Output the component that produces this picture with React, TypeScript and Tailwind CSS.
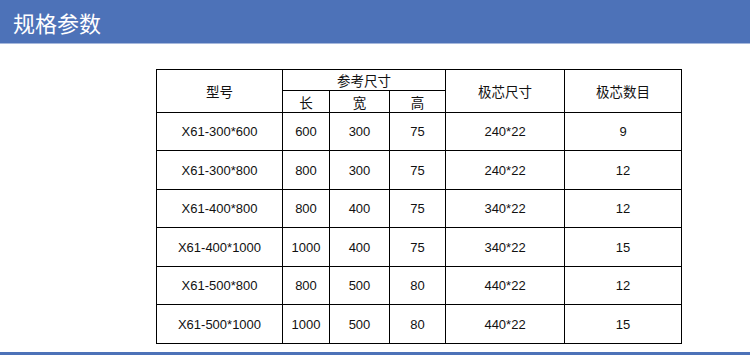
import React from 'react';

interface SpecRow {
  model: string;
  length: string;
  width: string;
  height: string;
  core: string;
  count: string;
}

const rows: SpecRow[] = [
  { model: 'X61-300*600', length: '600', width: '300', height: '75', core: '240*22', count: '9' },
  { model: 'X61-300*800', length: '800', width: '300', height: '75', core: '240*22', count: '12' },
  { model: 'X61-400*800', length: '800', width: '400', height: '75', core: '340*22', count: '12' },
  { model: 'X61-400*1000', length: '1000', width: '400', height: '75', core: '340*22', count: '15' },
  { model: 'X61-500*800', length: '800', width: '500', height: '80', core: '440*22', count: '12' },
  { model: 'X61-500*1000', length: '1000', width: '500', height: '80', core: '440*22', count: '15' },
];

const rowHeights = ['h-[38px]', 'h-[39px]', 'h-[38px]', 'h-[39px]', 'h-[38px]', 'h-[39px]'];

const cell = 'border border-black text-center align-middle p-0';

const App: React.FC = () => {
  return (
    <div className="w-[750px] h-[355px] bg-white flex flex-col overflow-hidden">
      <div className="h-[44px] bg-[#4d72b8] border-b border-[#a6b8dc] flex items-center pl-[13px]">
        <h1
          className="text-white text-[22px] leading-none font-normal"
          style={{ fontFamily: '"Noto Sans CJK SC", sans-serif' }}
        >
          规格参数
        </h1>
      </div>

      <div className="flex-1 pt-[25px] pl-[156px]">
        <table
          className="border-collapse table-fixed text-[13px] text-[#111]"
          style={{ fontFamily: '"Liberation Sans", "Noto Sans CJK SC", sans-serif', width: 525 }}
        >
          <colgroup>
            <col className="w-[126px]" />
            <col className="w-[47px]" />
            <col className="w-[60px]" />
            <col className="w-[56px]" />
            <col className="w-[119px]" />
            <col className="w-[117px]" />
          </colgroup>
          <thead className="text-[13.5px]" style={{ fontFamily: '"Noto Sans CJK SC", sans-serif' }}>
            <tr className="h-[21px]">
              <th rowSpan={2} className={`${cell} font-normal`}>型号</th>
              <th colSpan={3} className={`${cell} font-normal`}>参考尺寸</th>
              <th rowSpan={2} className={`${cell} font-normal`}>极芯尺寸</th>
              <th rowSpan={2} className={`${cell} font-normal`}>极芯数目</th>
            </tr>
            <tr className="h-[22px]">
              <th className={`${cell} font-normal`}>长</th>
              <th className={`${cell} font-normal`}>宽</th>
              <th className={`${cell} font-normal`}>高</th>
            </tr>
          </thead>
          <tbody>
            {rows.map((r, i) => (
              <tr key={r.model} className={rowHeights[i]}>
                <td className={cell}>{r.model}</td>
                <td className={cell}>{r.length}</td>
                <td className={cell}>{r.width}</td>
                <td className={cell}>{r.height}</td>
                <td className={cell}>{r.core}</td>
                <td className={cell}>{r.count}</td>
              </tr>
            ))}
          </tbody>
        </table>
      </div>

      <div className="h-[3px] bg-[#4d72b8]" />
    </div>
  );
};

export default App;
